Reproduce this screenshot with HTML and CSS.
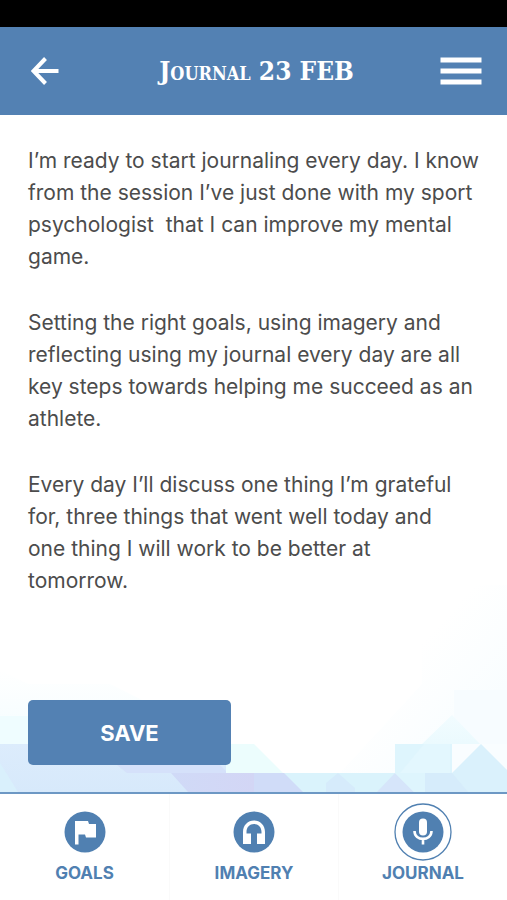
FILE: index.html
```html
<!DOCTYPE html>
<html lang="en">
<head>
<meta charset="utf-8">
<meta name="viewport" content="width=device-width, initial-scale=1">
<title>Journal 23 FEB</title>
<link rel="stylesheet" href="styles.css">
</head>
<body>
<div class="status-bar"></div>
<header class="header">
  <button class="icon-button" type="button" aria-label="Back">
    <svg width="28" height="28" viewBox="0 0 28 28"><path d="M27.500 14H3M14.500 1.500L2.500 14L14.500 26.500" fill="none" stroke="#fff" stroke-width="4"/></svg>
  </button>
  <h1 class="title">Journal 23 FEB</h1>
  <button class="icon-button" type="button" aria-label="Menu">
    <svg width="42" height="28" viewBox="0 0 42 28"><path d="M0.500 3H41.500M0.500 14H41.500M0.500 25H41.500" stroke="#fff" stroke-width="5"/></svg>
  </button>
</header>
<main class="entry">
  <svg class="backdrop" viewBox="0 0 507 222" preserveAspectRatio="none" aria-hidden="true">
    <defs>
      <linearGradient id="haze" x1="0" y1="0" x2="1" y2="1"><stop offset=".4" stop-color="#fff"/><stop offset="1" stop-color="#f5fcff"/></linearGradient>
      <linearGradient id="mist" x1="0" y1="0" x2="0" y2="1"><stop offset="0" stop-color="#fff"/><stop offset="1" stop-color="#f3fdff"/></linearGradient>
      <linearGradient id="peak" x1="0" y1="0" x2="0" y2="1"><stop offset="0" stop-color="#f2fcff"/><stop offset="1" stop-color="#ebfafe"/></linearGradient>
      <linearGradient id="violet" x1="0" y1="0" x2="1" y2="0"><stop offset="0" stop-color="#d0daf7"/><stop offset="1" stop-color="#d3d6f5"/></linearGradient>
      <linearGradient id="band" x1="0" y1="0" x2="0" y2="1"><stop offset="0" stop-color="#dcecfc"/><stop offset="1" stop-color="#d7e9fb"/></linearGradient>
    </defs>
    <path fill="url(#haze)" d="M340 203L422 114V70L465 15H507V203Z"/>
    <path fill="url(#mist)" d="M0 100L28 114H110L230 174H0Z"/>
    <path fill="#effdff" d="M0 146H28V174H0Z"/>
    <path fill="#f7fcff" d="M454 120H507V174H454Z"/>
    <path fill="url(#peak)" d="M422 174L452 145L480 174Z"/>
    <path fill="url(#band)" d="M0 174H228V222H0Z"/>
    <path fill="#d9f0fc" d="M0 193L18 222H0Z"/>
    <path fill="#d5e1fa" d="M117 195H220L228 203H127Z"/>
    <path fill="#ecfdfd" d="M226 174H254L283 203H226Z"/>
    <path fill="#daf3fc" d="M230 203H507V222H230Z"/>
    <path fill="url(#violet)" d="M171 203H254V222H188Z"/>
    <path fill="#d0dcf8" d="M254 203H284L303 222H254Z"/>
    <path fill="#d6ebfb" d="M326 222V213L338 203L355 218V222Z"/>
    <path fill="#d6e5fa" d="M377 222L395 203L414 222Z"/>
    <path fill="#def5fd" d="M395 174H452V203L433 222H414L395 203Z"/>
    <path fill="#e3f7fe" d="M424 174H450V203H400Z"/>
    <path fill="#f9fdff" d="M452 174H507V203H452Z"/>
    <path fill="#daf1fc" d="M452 203L481 174L507 200V222H425V203Z"/>
    <path fill="#d6ecfb" d="M425 203H452L468 222H425Z"/>
  </svg>
  <div class="text">
    <p>I’m ready to start journaling every day. I know
from the session I’ve just done with my sport
psychologist  that I can improve my mental
game.</p>
    <p>Setting the right goals, using imagery and
reflecting using my journal every day are all
key steps towards helping me succeed as an
athlete.</p>
    <p>Every day I’ll discuss one thing I’m grateful
for, three things that went well today and
one thing I will work to be better at
tomorrow.</p>
  </div>
  <button class="save" type="button">SAVE</button>
</main>
<nav class="tabs">
  <a class="tab" href="#goals">
    <svg class="tab-icon" viewBox="0 0 58 58"><circle cx="29" cy="29" r="20.500" fill="#5080b1"/><path fill="#fff" d="M19 18H32L33 21H40V34.500H30L29 31.500H22.500V41.500H19Z"/></svg>
    <span>GOALS</span>
  </a>
  <a class="tab" href="#imagery">
    <svg class="tab-icon" viewBox="0 0 58 58"><circle cx="29" cy="29" r="20.500" fill="#5080b1"/><path fill="#fff" d="M18 29C18 22 23 17.500 29 17.500S40 22 40 29V41H32V30.500H36.500V29C36.500 24 33.300 21 29 21S21.500 24 21.500 29V30.500H26V41H18Z"/></svg>
    <span>IMAGERY</span>
  </a>
  <a class="tab" href="#journal" aria-current="page">
    <svg class="tab-icon" viewBox="0 0 58 58"><circle cx="29" cy="29" r="28" fill="#fff" stroke="#5080b1" stroke-width="1.300"/><circle cx="29" cy="29" r="20.500" fill="#5080b1"/><rect x="25" y="15.500" width="8" height="17" rx="4" fill="#fff"/><path d="M20.500 28C20.500 38.500 37.500 38.500 37.500 28M29 36V41.500" fill="none" stroke="#fff" stroke-width="2.600"/></svg>
    <span>JOURNAL</span>
  </a>
</nav>
</body>
</html>
```
FILE: styles.css
```css
* {
  box-sizing: border-box;
}

body {
  margin: 0;
  min-height: 100vh;
  display: flex;
  flex-direction: column;
  background: #fff;
  color: #4c4c4c;
  font-family: Inter, "Liberation Sans", Arial, sans-serif;
}

button {
  border: 0;
  padding: 0;
  font: inherit;
  cursor: pointer;
}

.status-bar {
  height: 27px;
  background: #000;
}

.header {
  display: grid;
  grid-template-columns: 1fr auto 1fr;
  align-items: center;
  height: 88px;
  padding: 0 25px 0 31px;
  background: #5381b3;
  color: #fff;
}

.icon-button {
  display: flex;
  justify-self: start;
  background: none;
}

.icon-button:last-child {
  justify-self: end;
}

.title {
  margin: 0;
  font: bold 26px/32px "DejaVu Serif Condensed", "DejaVu Serif", serif;
  font-variant: small-caps;
}

.entry {
  position: relative;
  flex: 1;
  display: flex;
  flex-direction: column;
  align-items: flex-start;
  justify-content: space-between;
  gap: 32px;
  padding: 30px 28px 27px;
}

.backdrop {
  position: absolute;
  left: 0;
  bottom: 0;
  width: 100%;
  height: 222px;
  z-index: -1;
}

.text p {
  margin: 0 0 34px;
  font-size: 21px;
  line-height: 32px;
  white-space: pre-wrap;
}

.text p:last-child {
  margin-bottom: 0;
}

.save {
  width: 45%;
  height: 65px;
  border-radius: 5px;
  background: #5381b3;
  color: #fff;
  font-size: 22px;
  font-weight: bold;
}

.tabs {
  display: grid;
  grid-template-columns: repeat(3, 1fr);
  height: 108px;
  border-top: 2px solid #6d98c4;
  background: #fff;
}

.tab {
  display: flex;
  flex-direction: column;
  align-items: center;
  padding-top: 9px;
  color: #5080b1;
  font-size: 17px;
  font-weight: bold;
  line-height: 24px;
  text-decoration: none;
}

.tab + .tab {
  border-left: 1px solid #fafafa;
}

.tab-icon {
  width: 58px;
  height: 58px;
}
```
